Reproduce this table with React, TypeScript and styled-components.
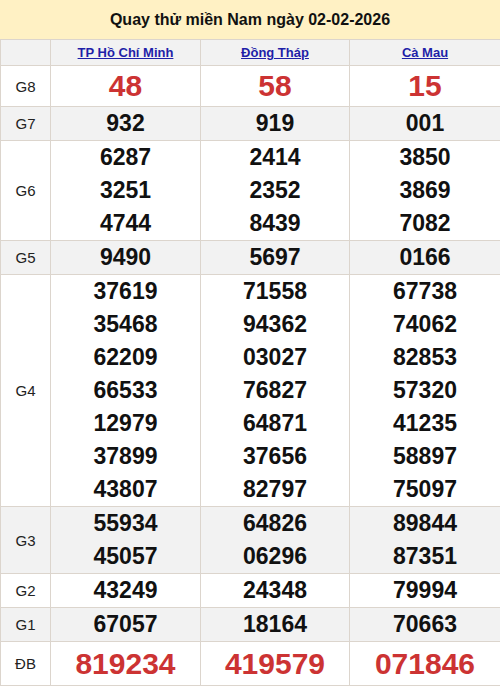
import styled, { createGlobalStyle } from "styled-components";

const GlobalStyle = createGlobalStyle`
  body {
    margin: 0;
    background: #fff;
    font-family: "Liberation Sans", Arial, sans-serif;
  }
`

const Wrapper = styled.div`
  width: 500px;
`

const Title = styled.div`
  height: 39px;
  background: #fff1c4;
  display: flex;
  align-items: center;
  justify-content: center;
  font-size: 16px;
  font-weight: bold;
  color: #111;
`

const Table = styled.table`
  width: 500px;
  border-collapse: collapse;
  table-layout: fixed;
`

const Row = styled.tr<{ $shaded?: boolean }>`
  background: ${(p) => (p.$shaded ? "#f2f2f2" : "#fff")};
`

const HeadCell = styled.th`
  height: 25px;
  padding: 0;
  border: 1px solid #dcd5cd;
  font-size: 13px;
  font-weight: bold;
  text-align: center;
  vertical-align: middle;

  a {
    color: #1f1fa8;
    text-decoration: underline;
  }
`

const Label = styled.td`
  width: 49px;
  padding: 0;
  border: 1px solid #dcd5cd;
  font-size: 15px;
  color: #222;
  text-align: center;
  vertical-align: middle;
`

const Cell = styled.td`
  padding: 0;
  border: 1px solid #dcd5cd;
  text-align: center;
  vertical-align: middle;
`

const Num = styled.div<{ $big?: boolean; $h?: number }>`
  font-weight: bold;
  font-size: ${(p) => (p.$big ? "30px" : "23px")};
  line-height: ${(p) => (p.$h ?? 33)}px;
  color: ${(p) => (p.$big ? "#cc3333" : "#111")};
`

interface Prize {
  name: string,
  values: string[][],
  big?: boolean,
  h?: number
}

const provinces = ["TP Hồ Chí Minh", "Đồng Tháp", "Cà Mau"];

const prizes: Prize[] = [
  { name: "G8", values: [["48"], ["58"], ["15"]], big: true, h: 40 },
  { name: "G7", values: [["932"], ["919"], ["001"]] },
  { name: "G6", values: [["6287", "3251", "4744"], ["2414", "2352", "8439"], ["3850", "3869", "7082"]] },
  { name: "G5", values: [["9490"], ["5697"], ["0166"]] },
  {
    name: "G4",
    values: [
      ["37619", "35468", "62209", "66533", "12979", "37899", "43807"],
      ["71558", "94362", "03027", "76827", "64871", "37656", "82797"],
      ["67738", "74062", "82853", "57320", "41235", "58897", "75097"],
    ],
  },
  { name: "G3", values: [["55934", "45057"], ["64826", "06296"], ["89844", "87351"]] },
  { name: "G2", values: [["43249"], ["24348"], ["79994"]] },
  { name: "G1", values: [["67057"], ["18164"], ["70663"]] },
  { name: "ĐB", values: [["819234"], ["419579"], ["071846"]], big: true, h: 43 },
];

export default function App() {
  return (
    <Wrapper>
      <GlobalStyle />
      <Title>Quay thử miền Nam ngày 02-02-2026</Title>
      <Table>
        <colgroup>
          <col style={{ width: 50 }} />
          <col style={{ width: 150 }} />
          <col style={{ width: 149 }} />
          <col style={{ width: 151 }} />
        </colgroup>
        <thead>
          <Row $shaded>
            <HeadCell></HeadCell>
            {provinces.map((p) => (
              <HeadCell key={p}>
                <a href="#">{p}</a>
              </HeadCell>
            ))}
          </Row>
        </thead>
        <tbody>
          {prizes.map((prize, i) => (
            <Row key={prize.name} $shaded={i % 2 === 1}>
              <Label>{prize.name}</Label>
              {prize.values.map((col, j) => (
                <Cell key={j}>
                  {col.map((v, k) => (
                    <Num key={k} $big={prize.big} $h={prize.h}>{v}</Num>
                  ))}
                </Cell>
              ))}
            </Row>
          ))}
        </tbody>
      </Table>
    </Wrapper>
  );
}
